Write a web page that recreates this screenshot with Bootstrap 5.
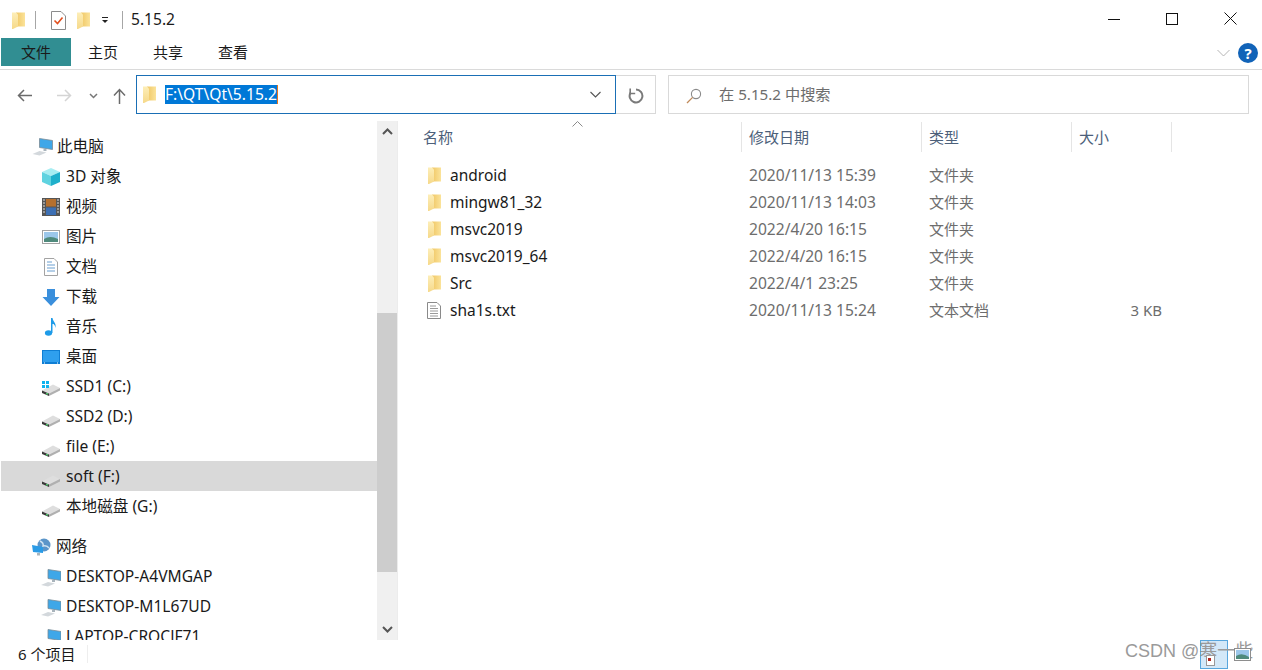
<!DOCTYPE html>
<html lang="zh">
<head>
    <meta charset="UTF-8">
    <title>5.15.2</title>
    <link href="https://cdn.jsdelivr.net/npm/bootstrap@5.3.0/dist/css/bootstrap.min.css" rel="stylesheet">
    <style>
        html, body { height: 670px; overflow: hidden; }
        body { font-family: "Noto Sans", "Noto Sans CJK SC", sans-serif; font-size: 15px; color: #1a1a1a; background: #fff; }
        .defs-holder { width: 0; height: 0; position: absolute; }
        .explorer { height: 670px; }
        .ico { display: block; flex: none; }

        .titlebar { height: 38px; padding: 2px 0 0 12px; flex: none; }
        .qa-sep { width: 1px; height: 18px; background: #a6a6a6; }
        .win-title { font-size: 15.6px; margin-left: 8px; }
        .win-btns { margin: 0 25px 3px auto; gap: 46px; }

        .ribbon { height: 32px; border-bottom: 1px solid #dadada; padding-left: 1px; flex: none; }
        .rib-file { width: 70px; height: 28px; background: #318e92; margin: 0 17px 3px 0; }
        .rib-tab { width: 65px; padding-bottom: 2px; }
        .rib-chev { margin-bottom: 2px; }
        .rib-help { width: 20px; height: 20px; border-radius: 50%; background: #1163b8; color: #fff; font-size: 15px; font-weight: 700; line-height: 20px; text-align: center; margin: 0 4px 1px 8px; }

        .addressbar { height: 51px; padding: 5px 13px 7px 17px; flex: none; }
        .nav-arrows { width: 119px; padding-top: 2px; }
        .addr-box { width: 480px; height: 39px; border: 1px solid #1a6fb5; padding: 0 14px 0 6px; font-size: 15.6px; }
        .addr-sel { background: #0078d7; color: #fff; line-height: 19px; margin-left: 9px; border-right: 1px solid #e8761a; }
        .refresh-box { width: 40px; height: 39px; border: 1px solid #d9d9d9; border-left: 0; margin-right: 12px; padding-top: 2px; }
        .search-box { height: 39px; border: 1px solid #d9d9d9; padding: 0 0 0 17px; color: #6d6d6d; gap: 17px; font-size: 15.2px; }
        .search-ico { margin-top: 2px; }

        .main-area { flex: 1 1 0; min-height: 0; }
        .side-pane { width: 377px; padding: 10px 0 0 1px; overflow: hidden; font-size: 15.6px; }
        .side-row { height: 30px; padding: 2px 0 0 41px; gap: 6px; white-space: nowrap; }
        .side-row.top-node { padding-left: 31px; gap: 4px; }
        .side-row.active-drive { background: #d9d9d9; }
        .side-gap { height: 10px; }
        .side-scroll { width: 20px; background: #f0f0f0; padding: 7px 0; }
        .scroll-thumb { height: 259px; background: #cdcdcd; margin-top: 178px; }
        .pane-split { width: 2px; border-left: 1px solid #ececec; }
        .pc-ico { margin: 2px -1px 0; }
        .drive-ico { margin-top: 8px; }

        .file-pane { min-width: 0; position: relative; }
        .cols { display: grid; grid-template-columns: 343px 180px 150px 100px; }
        .head-row { height: 30px; margin-top: 1px; margin-bottom: 10px; color: #4c607a; }
        .head-cell { padding-left: 7px; border-right: 1px solid #e5e5e5; }
        .head-cell.first { padding-left: 24px; }
        .sort-mark { position: absolute; left: 173px; top: 0; }
        .file-row { height: 27px; color: #6d6d6d; }
        .file-name { padding-left: 29px; gap: 9px; color: #1a1a1a; font-size: 15.5px; }
        .file-date { padding-left: 7px; font-size: 15.6px; }
        .file-kind { padding-left: 7px; }
        .file-size { padding-right: 10px; }
        .txt-ico { margin-left: -1px; }

        .statusbar { height: 30px; padding: 0 0 2px 18px; flex: none; }
        .status-sep { width: 1px; height: 18px; background: #eee; margin-left: 12px; }

        .watermark { position: absolute; left: 1125px; top: 638px; font-family: "Liberation Sans", "Noto Sans CJK SC", sans-serif; font-size: 18px; color: #9a9a9a; white-space: nowrap; }
        .drag-box { position: absolute; left: 1200px; top: 640px; width: 28px; height: 29px; background: #cce4f7; opacity: .85; border: 1px solid #3b97d8; }
        .drag-doc { position: absolute; left: 1206px; top: 655px; }
        .drag-pic { position: absolute; left: 1234px; top: 648px; }
    </style>
</head>
<body>
    <svg class="defs-holder" aria-hidden="true">
        <defs>
            <linearGradient id="fg" x1="0" y1="0" x2="1" y2="0">
                <stop offset="0" stop-color="#f0c765"/><stop offset="1" stop-color="#fbe39a"/>
            </linearGradient>
            <linearGradient id="ff" x1="0" y1="0" x2="0" y2="1">
                <stop offset="0" stop-color="#fdeeb8"/><stop offset="1" stop-color="#f6d98a"/>
            </linearGradient>
            <symbol id="folder" viewBox="0 0 13 17">
                <path d="M4 .5 H13 V14.5 H4Z" fill="url(#fg)"/>
                <path d="M0 .5 H4 L6 2.5 V14.5 L1 17 H0Z" fill="url(#ff)"/>
            </symbol>
            <symbol id="drive" viewBox="0 0 18 12">
                <path d="M0 6.5 L11 .5 L18 4 L7 9.5Z" fill="#dedede"/>
                <path d="M7 9.5 L18 4 V6.5 L7 12Z" fill="#b0b0b0"/>
                <path d="M0 6.5 L7 9.5 V12 L0 9Z" fill="#3a3a3a"/>
                <rect x="4" y="9" width="2" height="1.5" fill="#4fc26a"/>
            </symbol>
            <symbol id="pc" viewBox="0 0 20 18">
                <path d="M7 .5 L20 2.5 V11.5 L7 9.5Z" fill="#3fa7e8" stroke="#7b8b96" stroke-width=".8"/>
                <path d="M11 11 H14 V13 H11Z" fill="#a9b4bc"/>
                <path d="M0 16 L7 13 L14 14.5 L7 17.5Z" fill="#d3d8dc"/>
            </symbol>
        </defs>
    </svg>

    <div class="explorer d-flex flex-column">
        <!-- title bar -->
        <div class="titlebar d-flex align-items-center">
            <svg class="ico" width="13" height="17"><use href="#folder"/></svg>
            <span class="qa-sep" style="margin-left:10px"></span>
            <svg class="ico" style="margin-left:15px" width="15" height="19" viewBox="0 0 15 19">
                <path d="M.5.5 H10 L14.5 5 V18.5 H.5Z" fill="#fff" stroke="#8c8c8c"/>
                <path d="M3.5 9.5 L6.5 12.5 L11.5 6.5" fill="none" stroke="#e2501f" stroke-width="1.6"/>
            </svg>
            <svg class="ico" style="margin-left:11px" width="13" height="17"><use href="#folder"/></svg>
            <svg class="ico" style="margin-left:11px" width="8" height="8" viewBox="0 0 8 8">
                <path d="M1 1.5 H7" stroke="#222"/><path d="M1 4 H7 L4 7Z" fill="#222"/>
            </svg>
            <span class="qa-sep" style="margin-left:13px"></span>
            <span class="win-title">5.15.2</span>
            <div class="win-btns d-flex align-items-center">
                <svg width="12" height="12" viewBox="0 0 12 12"><path d="M0 6.5 H12" stroke="#111"/></svg>
                <svg width="12" height="12" viewBox="0 0 12 12"><rect x=".5" y=".5" width="11" height="11" fill="none" stroke="#111"/></svg>
                <svg width="13" height="13" viewBox="0 0 13 13"><path d="M.5.5 L12.5 12.5 M12.5.5 L.5 12.5" stroke="#111"/></svg>
            </div>
        </div>

        <!-- ribbon tabs -->
        <div class="ribbon d-flex align-items-center">
            <div class="rib-file d-flex align-items-center justify-content-center">文件</div>
            <div class="rib-tab">主页</div>
            <div class="rib-tab">共享</div>
            <div class="rib-tab">查看</div>
            <svg class="rib-chev ms-auto" width="13" height="8" viewBox="0 0 13 8"><path d="M.5 1 L6.5 7 L12.5 1" fill="none" stroke="#b5b5b5"/></svg>
            <div class="rib-help">?</div>
        </div>

        <!-- address row -->
        <div class="addressbar d-flex align-items-center">
            <div class="nav-arrows d-flex align-items-center">
                <svg width="16" height="13" viewBox="0 0 16 13"><path d="M15 6.5 H2 M7 1 L1.5 6.5 L7 12" fill="none" stroke="#6b6b6b" stroke-width="1.5"/></svg>
                <svg style="margin-left:23px" width="16" height="13" viewBox="0 0 16 13"><path d="M1 6.5 H14 M9 1 L14.5 6.5 L9 12" fill="none" stroke="#d4d4d4" stroke-width="1.5"/></svg>
                <svg style="margin-left:17px" width="9" height="6" viewBox="0 0 9 6"><path d="M1 1 L4.5 4.5 L8 1" fill="none" stroke="#777" stroke-width="1.5"/></svg>
                <svg style="margin-left:15px" width="13" height="16" viewBox="0 0 13 16"><path d="M6.5 16 V2 M1 7.5 L6.5 1.5 L12 7.5" fill="none" stroke="#6b6b6b" stroke-width="1.5"/></svg>
            </div>
            <div class="addr-box d-flex align-items-center">
                <svg class="ico" width="13" height="17"><use href="#folder"/></svg>
                <span class="addr-sel">F:\QT\Qt\5.15.2</span>
                <svg class="ms-auto" width="11" height="7" viewBox="0 0 11 7"><path d="M.5 1 L5.5 6 L10.5 1" fill="none" stroke="#555" stroke-width="1.1"/></svg>
            </div>
            <div class="refresh-box d-flex align-items-center justify-content-center">
                <svg width="16" height="16" viewBox="0 0 16 16"><path d="M8 1.6 A6.4 6.4 0 1 1 2.6 4.6" fill="none" stroke="#7a7a7a" stroke-width="2"/><path d="M2.2 .5 V5.5 H7.2" fill="none" stroke="#7a7a7a" stroke-width="1.6"/></svg>
            </div>
            <div class="search-box d-flex align-items-center flex-grow-1">
                <svg class="search-ico" width="16" height="16" viewBox="0 0 16 16"><circle cx="10" cy="6" r="4.6" fill="none" stroke="#8a8a8a" stroke-width="1.1"/><path d="M6.6 9.4 L1 15" stroke="#c08a5a" stroke-width="1.3"/></svg>
                <span>在 5.15.2 中搜索</span>
            </div>
        </div>

        <div class="main-area d-flex">
            <!-- navigation pane -->
            <div class="side-pane">
                <div class="side-row top-node d-flex align-items-center"><svg class="ico" width="21" height="18"><use href="#pc"/></svg>此电脑</div>
                <div class="side-row d-flex align-items-center">
                    <svg class="ico" width="18" height="18" viewBox="0 0 18 18"><path d="M9 0 L18 4 L9 8 L0 4Z" fill="#a8eef2"/><path d="M0 4 L9 8 V18 L0 14Z" fill="#5fd3e0"/><path d="M9 8 L18 4 V14 L9 18Z" fill="#1fb0cb"/></svg>3D 对象</div>
                <div class="side-row d-flex align-items-center">
                    <svg class="ico" width="18" height="18" viewBox="0 0 18 18"><rect width="18" height="18" fill="#555"/><rect x="4" y="1" width="10" height="7.5" fill="#b5702f"/><rect x="4" y="9.5" width="10" height="7.5" fill="#3c6fb4"/><path d="M1 2h2M1 5h2M1 8h2M1 11h2M1 14h2M15 2h2M15 5h2M15 8h2M15 11h2M15 14h2" stroke="#ddd"/></svg>视频</div>
                <div class="side-row d-flex align-items-center">
                    <svg class="ico" width="18" height="14" viewBox="0 0 18 14"><rect x=".5" y=".5" width="17" height="13" fill="#fff" stroke="#a3a3a3"/><rect x="2" y="2" width="14" height="10" fill="#9cc7ea"/><path d="M2 9 Q8 5 16 9 V12 H2Z" fill="#4f8a7c"/></svg>图片</div>
                <div class="side-row d-flex align-items-center">
                    <svg class="ico" width="18" height="18" viewBox="0 0 18 18"><path d="M2.5.5 H12 L15.5 4 V17.5 H2.5Z" fill="#fff" stroke="#a3a3a3"/><path d="M5 4h5M5 7h8M5 10h8M5 13h8" stroke="#6b9fd0"/></svg>文档</div>
                <div class="side-row d-flex align-items-center">
                    <svg class="ico" width="18" height="17" viewBox="0 0 18 17"><path d="M5 0 H13 V8 H17.5 L9 17 L.5 8 H5Z" fill="#3a8fdc"/></svg>下载</div>
                <div class="side-row d-flex align-items-center">
                    <svg class="ico" width="18" height="18" viewBox="0 0 18 18"><ellipse cx="6.5" cy="15" rx="3.6" ry="2.7" fill="#1e9be8"/><path d="M9 15 V0 H10.5 C11 4 14.5 4.5 13.5 10 C13 6.5 11.5 6 10.5 6 V15Z" fill="#1e9be8"/></svg>音乐</div>
                <div class="side-row d-flex align-items-center">
                    <svg class="ico" width="18" height="14" viewBox="0 0 18 14"><rect width="18" height="14" fill="#0f7ed4"/><rect x="1" y="1" width="16" height="11" fill="#2f9fee"/><path d="M2 13h1M15 13h1" stroke="#fff"/></svg>桌面</div>
                <div class="side-row d-flex align-items-center">
                    <svg class="ico" style="margin-top:3px" width="18" height="15" viewBox="0 0 18 15"><use href="#drive" y="3" height="12" width="18"/><path d="M0 0h3v3H0zM4 0h3v3H4zM0 4h3v3H0zM4 4h3v3H4z" fill="#10b3ee"/></svg>SSD1 (C:)</div>
                <div class="side-row d-flex align-items-center"><svg class="ico drive-ico" width="18" height="12"><use href="#drive"/></svg>SSD2 (D:)</div>
                <div class="side-row d-flex align-items-center"><svg class="ico drive-ico" width="18" height="12"><use href="#drive"/></svg>file (E:)</div>
                <div class="side-row active-drive d-flex align-items-center"><svg class="ico drive-ico" width="18" height="12"><use href="#drive"/></svg>soft (F:)</div>
                <div class="side-row d-flex align-items-center"><svg class="ico drive-ico" width="18" height="12"><use href="#drive"/></svg>本地磁盘 (G:)</div>
                <div class="side-gap"></div>
                <div class="side-row top-node d-flex align-items-center">
                    <svg class="ico" width="20" height="18" viewBox="0 0 20 18"><circle cx="12" cy="7" r="6.5" fill="#5b95c9"/><path d="M8 3 Q12 5 11 8 Q15 7 17 10" fill="none" stroke="#cfe3f2" stroke-width="1.4"/><path d="M0 7 L11 9 V15 L1 14Z" fill="#2a9be6"/><path d="M5 15 H8 V17.5 H5Z" fill="#a9b4bc"/></svg>网络</div>
                <div class="side-row d-flex align-items-center"><svg class="ico pc-ico" width="20" height="18"><use href="#pc"/></svg>DESKTOP-A4VMGAP</div>
                <div class="side-row d-flex align-items-center"><svg class="ico pc-ico" width="20" height="18"><use href="#pc"/></svg>DESKTOP-M1L67UD</div>
                <div class="side-row d-flex align-items-center"><svg class="ico pc-ico" width="20" height="18"><use href="#pc"/></svg>LAPTOP-CROCJF71</div>
            </div>
            <div class="side-scroll d-flex flex-column align-items-center">
                <svg width="11" height="7" viewBox="0 0 11 7"><path d="M1 6 L5.5 1.5 L10 6" fill="none" stroke="#555" stroke-width="2"/></svg>
                <div class="scroll-thumb w-100"></div>
                <svg class="mt-auto" width="11" height="7" viewBox="0 0 11 7"><path d="M1 1 L5.5 5.5 L10 1" fill="none" stroke="#555" stroke-width="2"/></svg>
            </div>
            <div class="pane-split"></div>

            <!-- file list -->
            <div class="file-pane flex-grow-1">
                <svg class="sort-mark" width="11" height="6" viewBox="0 0 11 6"><path d="M.5 5.5 L5.5 .5 L10.5 5.5" fill="none" stroke="#8a8a8a"/></svg>
                <div class="cols head-row">
                    <div class="head-cell first d-flex align-items-center">名称</div>
                    <div class="head-cell d-flex align-items-center">修改日期</div>
                    <div class="head-cell d-flex align-items-center">类型</div>
                    <div class="head-cell d-flex align-items-center">大小</div>
                </div>
                <div class="cols file-row align-items-center">
                    <div class="file-name d-flex align-items-center"><svg class="ico" width="13" height="17"><use href="#folder"/></svg>android</div>
                    <div class="file-date">2020/11/13 15:39</div><div class="file-kind">文件夹</div><div></div>
                </div>
                <div class="cols file-row align-items-center">
                    <div class="file-name d-flex align-items-center"><svg class="ico" width="13" height="17"><use href="#folder"/></svg>mingw81_32</div>
                    <div class="file-date">2020/11/13 14:03</div><div class="file-kind">文件夹</div><div></div>
                </div>
                <div class="cols file-row align-items-center">
                    <div class="file-name d-flex align-items-center"><svg class="ico" width="13" height="17"><use href="#folder"/></svg>msvc2019</div>
                    <div class="file-date">2022/4/20 16:15</div><div class="file-kind">文件夹</div><div></div>
                </div>
                <div class="cols file-row align-items-center">
                    <div class="file-name d-flex align-items-center"><svg class="ico" width="13" height="17"><use href="#folder"/></svg>msvc2019_64</div>
                    <div class="file-date">2022/4/20 16:15</div><div class="file-kind">文件夹</div><div></div>
                </div>
                <div class="cols file-row align-items-center">
                    <div class="file-name d-flex align-items-center"><svg class="ico" width="13" height="17"><use href="#folder"/></svg>Src</div>
                    <div class="file-date">2022/4/1 23:25</div><div class="file-kind">文件夹</div><div></div>
                </div>
                <div class="cols file-row align-items-center">
                    <div class="file-name d-flex align-items-center">
                        <svg class="ico txt-ico" width="14" height="17" viewBox="0 0 14 17"><path d="M.5.5 H10 L13.5 4 V16.5 H.5Z" fill="#fff" stroke="#8a8a8a"/><path d="M3 4h6M3 6.5h8M3 9h8M3 11.5h8M3 14h8" stroke="#9a9a9a"/></svg>sha1s.txt</div>
                    <div class="file-date">2020/11/13 15:24</div><div class="file-kind">文本文档</div><div class="file-size text-end">3 KB</div>
                </div>
            </div>
        </div>

        <div class="statusbar d-flex align-items-center">6 个项目<span class="status-sep"></span></div>
    </div>

    <!-- CSDN watermark and the drag ghost lying on top of the shot -->
    <div class="drag-box"></div>
    <div class="watermark">CSDN @寒一些</div>
    <svg class="drag-doc" width="9" height="11" viewBox="0 0 9 11"><rect x=".5" y=".5" width="8" height="10" fill="#fff" stroke="#999"/><rect x="2" y="3" width="3" height="3" fill="#b3261e"/></svg>
    <svg class="drag-pic" width="17" height="13" viewBox="0 0 17 13"><rect x=".5" y=".5" width="16" height="12" fill="#fff" stroke="#8e8e8e"/><rect x="2" y="2" width="13" height="9" fill="#9cc7ea"/><path d="M2 8 Q8 4 15 9 V11 H2Z" fill="#4f8a7c"/></svg>

    <script src="https://cdn.jsdelivr.net/npm/bootstrap@5.3.0/dist/js/bootstrap.bundle.min.js"></script>
</body>
</html>
